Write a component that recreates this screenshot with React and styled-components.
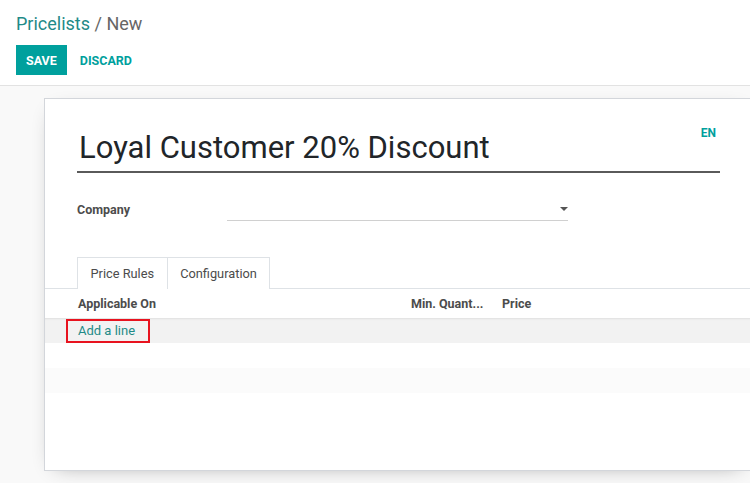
import styled, { createGlobalStyle } from 'styled-components'

const GlobalStyle = createGlobalStyle`
  html, body {
    margin: 0;
    padding: 0;
    overflow: hidden;
    background: #f9f9f9;
  }
  body {
    font-family: Roboto, "Liberation Sans", sans-serif;
    color: #212529;
  }
`

const Page = styled.div`
  width: 750px;
  height: 483px;
  display: flex;
  flex-direction: column;
  overflow: hidden;
`

const ControlPanel = styled.div`
  background: #fff;
  height: 86px;
  box-sizing: border-box;
  border-bottom: 1px solid #e2e2e2;
  padding: 12px 16px 0;
  display: flex;
  flex-direction: column;
  gap: 9px;
`

const Breadcrumb = styled.div`
  font-size: 18px;
  line-height: 24px;
  color: #666;

  a {
    color: #1f8a87;
    text-decoration: none;
  }
`

const ButtonRow = styled.div`
  display: flex;
  align-items: center;
  gap: 3px;
`

const Button = styled.button`
  font-family: inherit;
  font-size: 12.5px;
  font-weight: 700;
  height: 30px;
  padding: 0 10px;
  border: none;
  cursor: pointer;
  background: ${({ $primary }) => ($primary ? '#00a09d' : 'transparent')};
  color: ${({ $primary }) => ($primary ? '#fff' : '#00a09d')};
  border-radius: 0;
`

const Content = styled.div`
  flex: 1;
  padding: 12px 0 0 44px;
`

const Sheet = styled.div`
  width: 708px;
  height: 373px;
  box-sizing: border-box;
  background: #fff;
  border: 1px solid #d3d6db;
  border-right: none;
  box-shadow: 0 5px 20px -12px rgba(0, 0, 0, 0.45);
  padding: 0 32px;
  display: flex;
  flex-direction: column;
`

const TitleBox = styled.div`
  position: relative;
  padding-top: 26px;
`

const LangBadge = styled.span`
  position: absolute;
  top: 27px;
  right: 4px;
  font-size: 12px;
  font-weight: 700;
  color: #00a09d;
`

const Title = styled.h1`
  margin: 0;
  font-size: 31px;
  font-weight: 400;
  line-height: 46px;
  padding-left: 2px;
  border-bottom: 2px solid #5a5a5a;
`

const FieldRow = styled.div`
  display: flex;
  align-items: flex-end;
  margin-top: 25px;
`

const FieldLabel = styled.label`
  width: 150px;
  font-size: 12.5px;
  font-weight: 700;
  color: #4c4c4c;
  line-height: 20px;
  margin-bottom: 1px;
`

const SelectBox = styled.div`
  width: 341px;
  height: 22px;
  border-bottom: 1px solid #d0d0d0;
  display: flex;
  align-items: center;
  justify-content: flex-end;
`

const Caret = styled.span`
  width: 0;
  height: 0;
  border-left: 4px solid transparent;
  border-right: 4px solid transparent;
  border-top: 4px solid #555;
`

const TabNav = styled.div`
  display: flex;
  margin: 36px -32px 0;
  padding-left: 32px;
  border-bottom: 1px solid #dee2e6;
`

const Tab = styled.div`
  font-size: 12.8px;
  color: #4c4c4c;
  height: 32px;
  line-height: 32px;
  box-sizing: border-box;
  padding: 0 12.5px;
  border: 1px solid #dee2e6;
  border-bottom: none;
  background: #fff;
  margin-bottom: -1px;
  & + & {
    border-left: none;
  }
`

const Table = styled.div`
  margin: 0 -32px;
  display: flex;
  flex-direction: column;
`

const HeaderRow = styled.div`
  display: grid;
  grid-template-columns: 333px 91px 1fr;
  height: 29px;
  align-items: center;
  padding-left: 33px;
  font-size: 12.5px;
  font-weight: 700;
  color: #4c4c4c;
`

const Row = styled.div`
  height: ${({ $h }) => $h || 25}px;
  display: flex;
  align-items: center;
  padding-left: 21px;
  background: ${({ $bg }) => $bg || '#fff'};
  box-shadow: ${({ $shadow }) => ($shadow ? 'inset 0 2px 2px -1px rgba(0,0,0,0.08)' : 'none')};
`

const Highlight = styled.span`
  display: inline-flex;
  align-items: center;
  height: 24px;
  box-sizing: border-box;
  border: 2px solid #e8131f;
  padding: 0 13px 0 10px;
`

const AddLine = styled.a`
  font-size: 13px;
  color: #1f8a87;
  text-decoration: none;
  cursor: pointer;
`

export default function App() {
  return (
    <Page>
      <GlobalStyle />
      <ControlPanel>
        <Breadcrumb>
          <a href="#pricelists">Pricelists</a> / New
        </Breadcrumb>
        <ButtonRow>
          <Button $primary>SAVE</Button>
          <Button>DISCARD</Button>
        </ButtonRow>
      </ControlPanel>
      <Content>
        <Sheet>
          <TitleBox>
            <LangBadge>EN</LangBadge>
            <Title>Loyal Customer 20% Discount</Title>
          </TitleBox>
          <FieldRow>
            <FieldLabel>Company</FieldLabel>
            <SelectBox>
              <Caret />
            </SelectBox>
          </FieldRow>
          <TabNav>
            <Tab>Price Rules</Tab>
            <Tab>Configuration</Tab>
          </TabNav>
          <Table>
            <HeaderRow>
              <span>Applicable On</span>
              <span>Min. Quant...</span>
              <span>Price</span>
            </HeaderRow>
            <Row $bg="#f2f2f2" $shadow>
              <Highlight>
                <AddLine>Add a line</AddLine>
              </Highlight>
            </Row>
            <Row />
            <Row $bg="#fbfbfb" />
          </Table>
        </Sheet>
      </Content>
    </Page>
  )
}
